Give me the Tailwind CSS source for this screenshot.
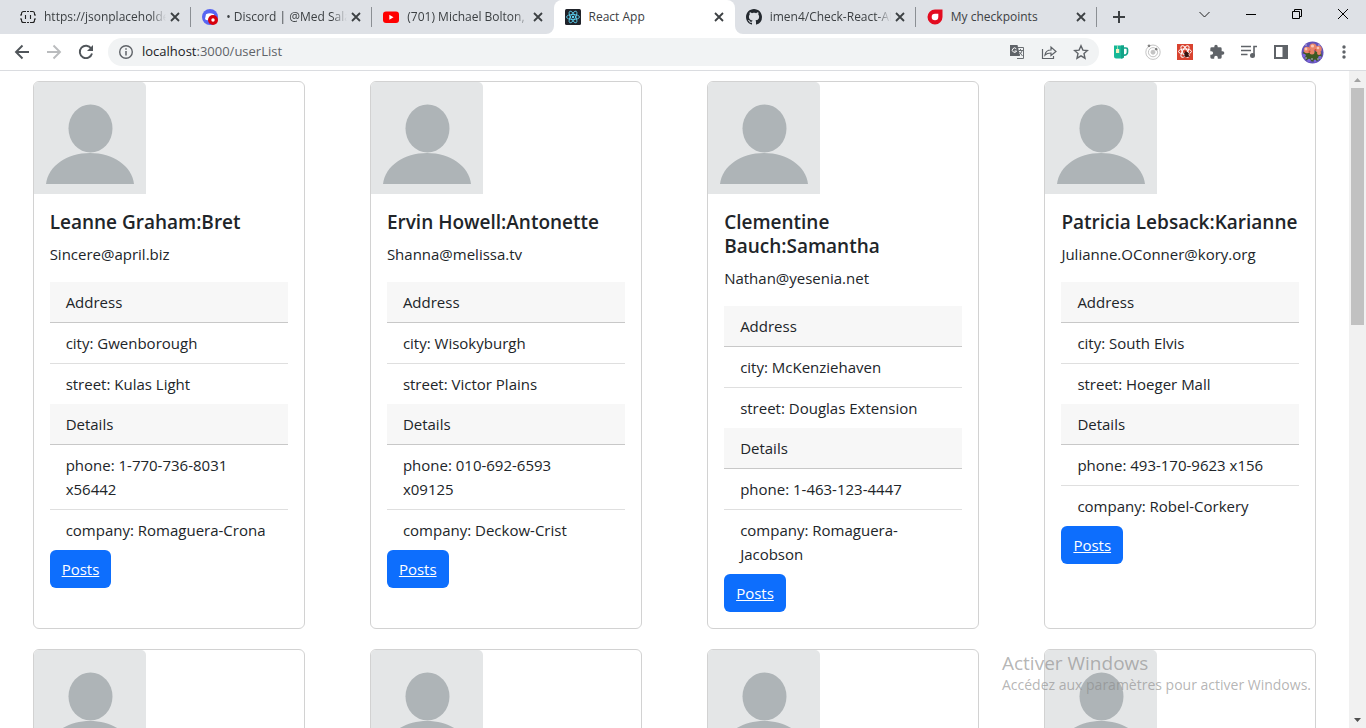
<!DOCTYPE html>
<html lang="fr">
<head>
<meta charset="utf-8">
<meta name="viewport" content="width=device-width, initial-scale=1">
<title>React App</title>
<script src="https://cdn.jsdelivr.net/npm/@tailwindcss/browser@4"></script>
</head>
<body class="flex h-screen flex-col overflow-hidden bg-white font-['Open_Sans',sans-serif] text-[#212529]">

<svg class="hidden" aria-hidden="true">
  <symbol id="x" viewBox="0 0 10 10"><path d="M1 1l8 8M9 1L1 9" stroke="#3c4043" stroke-width="1.8" fill="none"/></symbol>
  <symbol id="avatar" viewBox="0 0 112 112"><rect width="112" height="112" fill="#e4e6e7"/><ellipse cx="56.500" cy="46.500" rx="22" ry="24" fill="#aeb4b7"/><path d="M12 102C14 84 33 71 56 71s42 13 44 31z" fill="#aeb4b7"/></symbol>
</svg>

<!-- Tab strip -->
<header class="flex h-[34px] shrink-0 justify-between bg-[#dee1e6] pl-[10px]">
  <div class="flex">
    <nav class="grid w-[1087px] grid-cols-6 text-[12px] text-[#3c4043]" aria-label="Onglets">
      <div class="flex items-center pl-[10px]">
        <svg class="size-4 shrink-0" viewBox="0 0 16 16" fill="none" stroke="#222" stroke-width="1.100"><path d="M1.500 5.500V4.500a2 2 0 0 1 2-2H6M10 2.500h2.500a2 2 0 0 1 2 2v1M1.500 10.500v1a2 2 0 0 0 2 2H6M10 13.500h2.500a2 2 0 0 0 2-2v-1M7 2.500h2M7 13.500h2M0 6h2M14 6h2M0 10h2M14 10h2M5.500 6v4M10.500 6v4"/></svg>
        <span class="ml-2 flex-1 overflow-hidden whitespace-nowrap [mask-image:linear-gradient(to_right,#000_88%,transparent)]">https://jsonplaceholde</span>
        <button class="mr-2.5 ml-1 shrink-0" aria-label="Fermer"><svg class="size-[10px]"><use href="#x"/></svg></button>
        <i class="h-5 w-px bg-[#8b8f94]"></i>
      </div>
      <div class="flex items-center pl-[11px]">
        <svg class="size-4 shrink-0" viewBox="0 0 16 16"><circle cx="8" cy="8" r="8" fill="#5865f2"/><path d="M4 5.200Q8 3.500 12 5.200L13 10q-2 1.700-3 1.300L9.300 10.300H6.700L6 11.300Q4 11.500 3 10z" fill="#fff"/><circle cx="11" cy="11" r="5" fill="#d8000c"/><circle cx="11" cy="11" r="1.700" fill="#fff"/></svg>
        <span class="ml-2 flex-1 overflow-hidden whitespace-nowrap [mask-image:linear-gradient(to_right,#000_88%,transparent)]">• Discord | @Med Sala</span>
        <button class="mr-2.5 ml-1 shrink-0" aria-label="Fermer"><svg class="size-[10px]"><use href="#x"/></svg></button>
        <i class="h-5 w-px bg-[#8b8f94]"></i>
      </div>
      <div class="flex items-center pl-[11px]">
        <svg class="size-4 shrink-0" viewBox="0 0 16 16"><rect y="2.500" width="16" height="11.500" rx="3" fill="#f00"/><path d="M6.300 5.800v5L10.500 8.300z" fill="#fff"/></svg>
        <span class="ml-2 flex-1 overflow-hidden whitespace-nowrap [mask-image:linear-gradient(to_right,#000_88%,transparent)]">(701) Michael Bolton,</span>
        <button class="mr-2.5 ml-1 shrink-0" aria-label="Fermer"><svg class="size-[10px]"><use href="#x"/></svg></button>
        <i class="h-5 w-px"></i>
      </div>
      <div class="relative flex items-center rounded-t-lg bg-white pl-[11px]">
        <svg class="absolute bottom-0 -left-2 size-2" viewBox="0 0 8 8"><path d="M8 0v8H0a8 8 0 0 0 8-8z" fill="#fff"/></svg>
        <svg class="absolute -right-2 bottom-0 size-2" viewBox="0 0 8 8"><path d="M0 0v8h8a8 8 0 0 1-8-8z" fill="#fff"/></svg>
        <svg class="size-4 shrink-0" viewBox="0 0 16 16"><rect width="16" height="16" rx="1.500" fill="#20232a"/><g fill="none" stroke="#61dafb" stroke-width=".8"><ellipse cx="8" cy="8" rx="6.500" ry="2.500"/><ellipse cx="8" cy="8" rx="6.500" ry="2.500" transform="rotate(60 8 8)"/><ellipse cx="8" cy="8" rx="6.500" ry="2.500" transform="rotate(120 8 8)"/></g><circle cx="8" cy="8" r="1.200" fill="#61dafb"/></svg>
        <span class="ml-2 flex-1 overflow-hidden whitespace-nowrap">React App</span>
        <button class="mr-2.5 ml-1 shrink-0" aria-label="Fermer"><svg class="size-[10px]"><use href="#x"/></svg></button>
        <i class="h-5 w-px"></i>
      </div>
      <div class="flex items-center pl-[11px]">
        <svg class="size-4 shrink-0" viewBox="0 0 16 16"><path fill="#24292f" d="M8 0C3.580 0 0 3.580 0 8c0 3.540 2.290 6.530 5.470 7.590.4.070.55-.17.55-.38 0-.19-.01-.82-.01-1.490-2.010.37-2.530-.49-2.690-.94-.09-.23-.48-.94-.82-1.130-.28-.15-.68-.52-.01-.53.63-.01 1.080.58 1.230.82.72 1.210 1.870.87 2.330.66.07-.52.28-.87.51-1.070-1.780-.2-3.640-.89-3.640-3.950 0-.87.31-1.590.82-2.150-.08-.2-.36-1.020.08-2.120 0 0 .67-.21 2.200.82.64-.18 1.320-.27 2-.27s1.360.09 2 .27c1.530-1.040 2.200-.82 2.200-.82.44 1.100.16 1.920.08 2.120.51.56.82 1.270.82 2.150 0 3.070-1.870 3.750-3.650 3.950.29.25.54.73.54 1.480 0 1.070-.01 1.930-.01 2.200 0 .21.15.46.55.38A8.010 8.010 0 0 0 16 8c0-4.420-3.580-8-8-8z"/></svg>
        <span class="ml-2 flex-1 overflow-hidden whitespace-nowrap [mask-image:linear-gradient(to_right,#000_88%,transparent)]">imen4/Check-React-AP</span>
        <button class="mr-2.5 ml-1 shrink-0" aria-label="Fermer"><svg class="size-[10px]"><use href="#x"/></svg></button>
        <i class="h-5 w-px bg-[#8b8f94]"></i>
      </div>
      <div class="flex items-center pl-[11px]">
        <svg class="size-4 shrink-0" viewBox="0 0 16 16"><path d="M8 .5h7.500V8A7.500 7.500 0 1 1 8 .5z" fill="#e30c20"/><path d="M8 4.700h3.300V8A3.300 3.300 0 1 1 8 4.700z" fill="#fff"/></svg>
        <span class="ml-2 flex-1 overflow-hidden whitespace-nowrap">My checkpoints</span>
        <button class="mr-2.5 ml-1 shrink-0" aria-label="Fermer"><svg class="size-[10px]"><use href="#x"/></svg></button>
        <i class="h-5 w-px bg-[#8b8f94]"></i>
      </div>
    </nav>
    <button class="ml-4" aria-label="Nouvel onglet"><svg class="size-3" viewBox="0 0 12 12"><path d="M6 0v12M0 6h12" stroke="#3c4043" stroke-width="2"/></svg></button>
  </div>
  <div class="flex h-7 items-center gap-9 pr-[18px]">
    <button aria-label="Rechercher dans les onglets"><svg class="size-[11px]" viewBox="0 0 11 11" fill="none" stroke="#222"><path d="M.5 3l5 5 5-5"/></svg></button>
    <button aria-label="Réduire"><svg class="size-[10px]" viewBox="0 0 10 10"><path d="M0 5.500h10" stroke="#000"/></svg></button>
    <button aria-label="Restaurer"><svg class="size-[10px]" viewBox="0 0 10 10" fill="none" stroke="#000"><path d="M.5 2.500h7v7h-7zM2.500 2.500v-2h7v7h-2"/></svg></button>
    <button aria-label="Fermer la fenêtre"><svg class="size-[10px]" viewBox="0 0 10 10" stroke="#000"><path d="M0 0l10 10M10 0L0 10"/></svg></button>
  </div>
</header>

<!-- Toolbar -->
<div class="flex h-[37px] shrink-0 items-center border-b border-[#dadce0] bg-white pr-[14px] pl-3">
  <div class="flex items-center gap-3">
    <button class="p-0.5" aria-label="Retour"><svg class="size-4" viewBox="0 0 16 16" fill="none" stroke="#50555a" stroke-width="1.900"><path d="M15 8H2M8.500 1.500L2 8l6.500 6.500"/></svg></button>
    <button class="p-0.5" aria-label="Avancer"><svg class="size-4" viewBox="0 0 16 16" fill="none" stroke="#babcbe" stroke-width="1.900"><path d="M1 8h13M7.500 1.500L14 8l-6.500 6.500"/></svg></button>
    <button class="p-0.5" aria-label="Actualiser"><svg class="size-4" viewBox="0 0 16 16"><path d="M13.200 4.500A6.200 6.200 0 1 0 14 9.500" fill="none" stroke="#50555a" stroke-width="1.900"/><path d="M15 1v6H9z" fill="#50555a"/></svg></button>
  </div>
  <div class="ml-3 flex h-7 flex-1 items-center rounded-full bg-[#f1f3f4] pr-[10px] pl-[10px]">
    <svg class="size-4 shrink-0" viewBox="0 0 16 16"><circle cx="8" cy="8" r="6.300" fill="none" stroke="#5f6368" stroke-width="1.400"/><path d="M8 7v4.500M8 4.300v1.500" stroke="#5f6368" stroke-width="1.500"/></svg>
    <p class="ml-2 flex-1 text-[13px] text-[#5f6368]"><span class="text-[#202124]">localhost</span>:3000/userList</p>
    <div class="flex items-center gap-4">
      <button aria-label="Traduire"><svg class="size-4" viewBox="0 0 16 16"><path d="M7 3.500h7.500v11H8" fill="none" stroke="#6a6e72"/><path d="M1 1h7.500l2.500 11H1z" fill="#5f6368"/><path d="M7.300 4.800A2.200 2.200 0 1 0 7.600 7H5.500" fill="none" stroke="#fff"/><path d="M9.500 6.500H14M11.500 5v1.500M13 6.500c-.5 2-1.500 3.500-3 4.500M10.500 8l3 4" fill="none" stroke="#6a6e72"/></svg></button>
      <button aria-label="Partager"><svg class="size-4" viewBox="0 0 16 16" fill="none" stroke="#5f6368" stroke-width="1.200"><path d="M1.500 5v9.500h11V12M4 11c.5-3.500 2.500-5 6-5V3l5 4.500-5 4V9C7.500 9 5.500 9.500 4 11z"/></svg></button>
      <button aria-label="Ajouter aux favoris"><svg class="size-4" viewBox="0 0 16 16" fill="none" stroke="#5f6368" stroke-width="1.400"><path d="M8 1.800l1.900 4.300 4.600.4-3.500 3.100 1 4.600-4-2.400-4 2.400 1-4.600L1.500 6.500l4.600-.4z"/></svg></button>
    </div>
  </div>
  <div class="ml-[14px] flex items-center gap-4">
    <button aria-label="Extension tasse"><svg class="size-4" viewBox="0 0 16 16"><path d="M10.500 4H13a1.500 1.500 0 0 1 1.500 1.500V8A3 3 0 0 1 10.500 11" fill="none" stroke="#15a58a" stroke-width="1.700"/><path d="M1 1.500h10V12a2.500 2.500 0 0 1-2.500 2.500H3A2 2 0 0 1 1 12.500z" fill="#17b897"/><path d="M8 1.500h3V12a2.500 2.500 0 0 1-2.500 2.500H8z" fill="#12a388"/><path d="M4.500 1.500V5" stroke="#e8f5c8" stroke-width=".6"/><rect x="3" y="5" width="3.200" height="4" fill="#f0f2c0"/></svg></button>
    <button aria-label="Extension orbite"><svg class="size-4" viewBox="0 0 16 16" fill="none" stroke="#c4c4c4"><circle cx="8" cy="8.200" r="7.200"/><circle cx="8" cy="8.200" r="4.600"/><circle cx="8" cy="8.200" r="2" fill="#c4c4c4"/><circle cx="4" cy="1.800" r=".9" fill="#777" stroke="#777"/><circle cx="11.200" cy="5.200" r=".9" fill="#777" stroke="#777"/></svg></button>
    <button aria-label="React Developer Tools"><svg class="size-4" viewBox="0 0 16 16"><rect width="16" height="16" fill="#d9432f"/><g fill="none" stroke="#fff"><ellipse cx="8" cy="7.500" rx="6.500" ry="2.500"/><ellipse cx="8" cy="7.500" rx="6.500" ry="2.500" transform="rotate(60 8 7.500)"/><ellipse cx="8" cy="7.500" rx="6.500" ry="2.500" transform="rotate(120 8 7.500)"/></g><ellipse cx="9.500" cy="10.500" rx="2" ry="2.800" fill="#351410"/><path d="M6.500 9l6 3.500M6.500 12.500l6-3.500M8 7l4 6" stroke="#351410" stroke-width=".8"/></svg></button>
    <button aria-label="Extensions"><svg class="size-4" viewBox="0 0 24 24"><path d="M20.500 11H19V7a2 2 0 0 0-2-2h-4V3.500a2.500 2.500 0 0 0-5 0V5H4a2 2 0 0 0-2 2v3.800h1.500a2.700 2.700 0 0 1 0 5.400H2V20a2 2 0 0 0 2 2h3.800v-1.500a2.700 2.700 0 0 1 5.400 0V22H17a2 2 0 0 0 2-2v-4h1.500a2.500 2.500 0 0 0 0-5z" fill="#5f6368"/></svg></button>
    <button aria-label="Contrôle multimédia"><svg class="size-4" viewBox="0 0 16 16" fill="none" stroke="#5f6368" stroke-width="1.600"><path d="M0 2.500h10M0 6.500h10M0 10.500h6.500M13 11.500V2.500h3"/><circle cx="11.500" cy="11.500" r="1.700" fill="#5f6368"/></svg></button>
    <button aria-label="Panneau latéral"><svg class="size-4" viewBox="0 0 16 16"><path d="M2 2h12v12H2z" fill="#fff" stroke="#5f6368" stroke-width="2"/><path d="M9.500 2H14v12H9.500z" fill="#5f6368"/></svg></button>
  </div>
  <button class="ml-3" aria-label="Profil"><svg class="size-[23px]" viewBox="0 0 23 23"><clipPath id="c"><circle cx="11.500" cy="11.500" r="11"/></clipPath><g clip-path="url(#c)"><rect width="23" height="23" fill="#6353b8"/><path d="M2 11l18-1 1 7-7 4-9-2z" fill="#3d5a24"/><g fill="#ea8468"><circle cx="6" cy="9" r="3.200"/><circle cx="12" cy="6" r="3.600"/><circle cx="17.500" cy="8" r="3.200"/><circle cx="11" cy="11" r="2.500"/><circle cx="18" cy="12" r="2"/></g><g fill="#f9c8b5"><circle cx="5" cy="8" r="1.400"/><circle cx="11.500" cy="5" r="1.600"/><circle cx="17" cy="7" r="1.300"/></g><g fill="#cb4a3c"><circle cx="8.500" cy="10.500" r="1"/><circle cx="14.500" cy="9" r="1"/></g><g fill="#7c64dd"><circle cx="3" cy="14.500" r="1.800"/><circle cx="19" cy="16.500" r="1.800"/><circle cx="8" cy="19.500" r="1.800"/><circle cx="14" cy="20" r="1.500"/></g><g fill="#c9bdf2"><circle cx="5" cy="17" r=".8"/><circle cx="11" cy="18" r=".8"/><circle cx="17" cy="18" r=".8"/><circle cx="5" cy="4" r=".8"/><circle cx="18" cy="4" r=".8"/></g></g></svg></button>
  <button class="ml-3 flex w-4 justify-center" aria-label="Menu"><svg class="h-4 w-1" viewBox="0 0 4 16" fill="#5f6368"><circle cx="2" cy="3" r="1.700"/><circle cx="2" cy="8" r="1.700"/><circle cx="2" cy="13" r="1.700"/></svg></button>
</div>

<div class="flex min-h-0 flex-1">
  <main class="grid flex-1 auto-rows-max grid-cols-4 justify-items-center gap-y-5 overflow-hidden pt-[10px] text-[15px] leading-6" id="users"></main>
  <!-- Scrollbar -->
  <div class="flex w-[17px] flex-col items-center bg-[#f1f1f1]" aria-hidden="true">
    <svg class="h-[17px] w-[17px]" viewBox="0 0 17 17"><path d="M5 11h7L8.500 7z" fill="#a3a3a3"/></svg>
    <div class="h-[237px] w-[13px] bg-[#c1c1c1]"></div>
    <svg class="mt-auto h-[17px] w-[17px]" viewBox="0 0 17 17"><path d="M5 7h7l-3.500 4z" fill="#505050"/></svg>
  </div>
</div>

<!-- Windows activation notice -->
<aside class="pointer-events-none absolute right-[55px] bottom-[33px] text-[#8c8c8c]/65">
  <p class="text-[19px] leading-6">Activer Windows</p>
  <p class="text-[14px] leading-5 whitespace-nowrap">Accédez aux paramètres pour activer Windows.</p>
</aside>

<script>
const users = [
  ["Leanne Graham:Bret","Sincere@april.biz","Gwenborough","Kulas Light","1-770-736-8031 x56442","Romaguera-Crona"],
  ["Ervin Howell:Antonette","Shanna@melissa.tv","Wisokyburgh","Victor Plains","010-692-6593 x09125","Deckow-Crist"],
  ["Clementine Bauch:Samantha","Nathan@yesenia.net","McKenziehaven","Douglas Extension","1-463-123-4447","Romaguera-Jacobson"],
  ["Patricia Lebsack:Karianne","Julianne.OConner@kory.org","South Elvis","Hoeger Mall","493-170-9623 x156","Robel-Corkery"],
  ["Chelsey Dietrich:Kamren","Lucio_Hettinger@annie.ca","Roscoeview","Skiles Walks","(254)954-1289","Keebler LLC"],
  ["Mrs. Dennis Schulist:Leopoldo_Corkery","Karley_Dach@jasper.info","South Christy","Norberto Crossing","1-477-935-8478 x6430","Considine-Lockman"],
  ["Kurtis Weissnat:Elwyn.Skiles","Telly.Hoeger@billy.biz","Howemouth","Rex Trail","210.067.6132","Johns Group"],
  ["Nicholas Runolfsdottir V:Maxime_Nienow","Sherwood@rosamond.me","Aliyaview","Ellsworth Summit","586.493.6943 x140","Abernathy Group"]
];
document.getElementById("users").innerHTML = users.map(([name, mail, city, street, phone, company]) => `
  <article class="w-[272px] overflow-hidden rounded-md border border-[#d2d2d2] bg-white">
    <svg class="size-28 rounded-tr-[5px]" role="img" aria-label="Avatar"><use href="#avatar"/></svg>
    <div class="p-4">
      <h2 class="mb-2 text-[19px] leading-6 font-semibold">${name}</h2>
      <p class="mb-4">${mail}</p>
      <h3 class="border-b border-[#c8c8c8] bg-[#f7f7f7] px-4 py-2">Address</h3>
      <ul>
        <li class="border-b border-[#dfdfdf] py-2 pr-5 pl-4">city: ${city}</li>
        <li class="py-2 pr-5 pl-4">street: ${street}</li>
      </ul>
      <h3 class="border-b border-[#c8c8c8] bg-[#f7f7f7] px-4 py-2">Details</h3>
      <ul>
        <li class="border-b border-[#dfdfdf] py-2 pr-5 pl-4">phone: ${phone}</li>
        <li class="py-2 pr-5 pl-4">company: ${company}</li>
      </ul>
      <a href="#" class="inline-block rounded-md bg-[#0d6efd] px-3 py-[7px] text-white underline">Posts</a>
    </div>
  </article>`).join("");
</script>
</body>
</html>
